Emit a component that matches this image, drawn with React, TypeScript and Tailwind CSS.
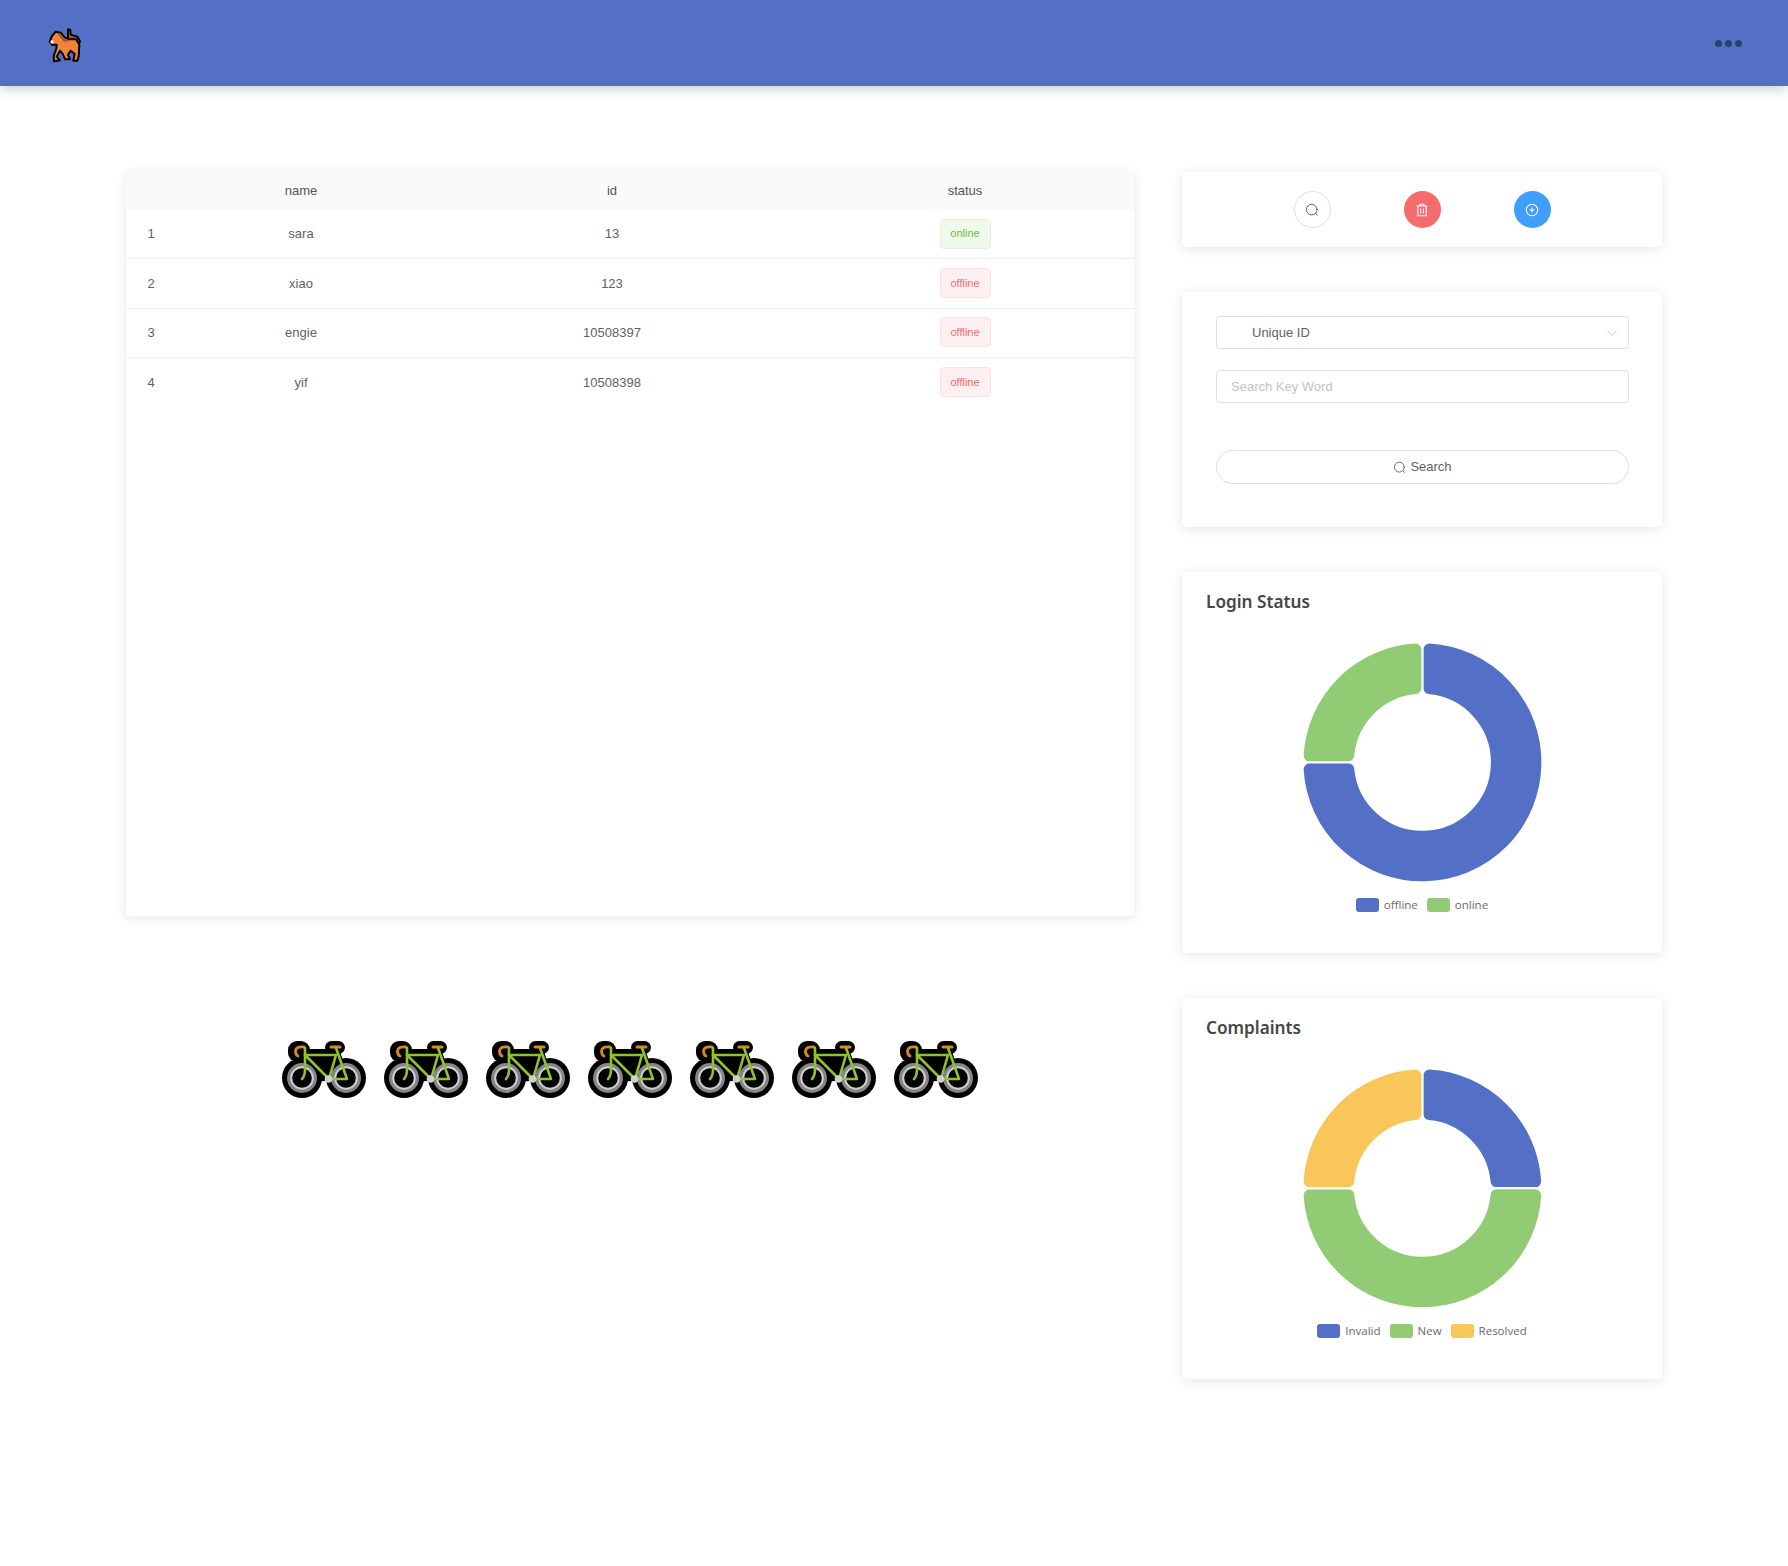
import React from "react";

const rows = [
  { n: 1, name: "sara", id: "13", status: "online" },
  { n: 2, name: "xiao", id: "123", status: "offline" },
  { n: 3, name: "engie", id: "10508397", status: "offline" },
  { n: 4, name: "yif", id: "10508398", status: "offline" },
];

function sector(cx: number, cy: number, R: number, r: number, c: number, a0: number, a1: number) {
  const P = (d: number, deg: number) => {
    const t = (deg * Math.PI) / 180;
    return `${(cx + d * Math.sin(t)).toFixed(2)} ${(cy - d * Math.cos(t)).toFixed(2)}`;
  };
  const ao = (Math.asin(c / (R - c)) * 180) / Math.PI;
  const ai = (Math.asin(c / (r + c)) * 180) / Math.PI;
  const dO = Math.sqrt((R - c) ** 2 - c ** 2);
  const dI = Math.sqrt((r + c) ** 2 - c ** 2);
  const large = a1 - a0 > 180 ? 1 : 0;
  return [
    `M ${P(R, a0 + ao)}`,
    `A ${R} ${R} 0 ${large} 1 ${P(R, a1 - ao)}`,
    `A ${c} ${c} 0 0 1 ${P(dO, a1)}`,
    `L ${P(dI, a1)}`,
    `A ${c} ${c} 0 0 1 ${P(r, a1 - ai)}`,
    `A ${r} ${r} 0 ${large} 0 ${P(r, a0 + ai)}`,
    `A ${c} ${c} 0 0 1 ${P(dI, a0)}`,
    `L ${P(dO, a0)}`,
    `A ${c} ${c} 0 0 1 ${P(R, a0 + ao)}`,
    "Z",
  ].join(" ");
}

function Donut({ parts }: { parts: { from: number; to: number; color: string }[] }) {
  return (
    <svg width="244" height="244" viewBox="0 0 244 244" className="block">
      {parts.map((p, i) => (
        <path key={i} d={sector(122.4, 122.3, 120, 67.5, 7, p.from, p.to)} fill={p.color} stroke="#ffffff" strokeWidth="2" />
      ))}
    </svg>
  );
}

function Legend({ items }: { items: { label: string; color: string }[] }) {
  return (
    <div className="flex justify-center items-center gap-[9px] h-[14px] text-[11.5px] text-[#6a6a6a] font-['Open_Sans','Noto_Sans',sans-serif]">
      {items.map((it) => (
        <div key={it.label} className="flex items-center gap-[5px]">
          <span className="block w-[23px] h-[14px] rounded-[3px]" style={{ backgroundColor: it.color }} />
          <span className="leading-none">{it.label}</span>
        </div>
      ))}
    </div>
  );
}

function Bike() {
  const green = "#8fc22e";
  return (
    <svg width="84" height="58" viewBox="0 0 84 58" className="block shrink-0">
      <g fill="#000000">
        <circle cx="20" cy="38" r="20" />
        <circle cx="64" cy="38" r="20" />
        <rect x="6" y="1" width="22" height="21" rx="9" />
        <rect x="43" y="1" width="20" height="13" rx="6.5" />
        <path d="M 22 9 L 57 9 L 68 40 L 20 42 Z" />
      </g>
      <circle cx="20" cy="38" r="13" fill="none" stroke="#858585" strokeWidth="4" />
      <circle cx="20" cy="38" r="10.8" fill="none" stroke="#cfcfcf" strokeWidth="2" />
      <circle cx="64" cy="38" r="13" fill="none" stroke="#858585" strokeWidth="4" />
      <circle cx="64" cy="38" r="10.8" fill="none" stroke="#cfcfcf" strokeWidth="2" />
      <path d="M 22 7 Q 14 6 13.5 11 Q 13.5 15 16 16" fill="none" stroke="#d68a1c" strokeWidth="2.8" strokeLinecap="round" />
      <path d="M 49 7 L 58 7" fill="none" stroke="#d68a1c" strokeWidth="3" strokeLinecap="round" />
      <g fill="none" stroke={green} strokeWidth="2.6" strokeLinecap="round" strokeLinejoin="round">
        <path d="M 23 8 L 23 29 Q 23 36 20 39" />
        <path d="M 23 15 L 47 39 L 65 39 L 54 8" />
        <path d="M 23 15 L 54 15 L 47 39" />
      </g>
      <circle cx="46.5" cy="39" r="3.8" fill="#d0cfce" />
    </svg>
  );
}

function Horse() {
  return (
    <svg width="50" height="50" viewBox="0 0 150 150" className="block">
      <path
        d="M 84 28 L 91 30 L 92 44 L 112 50 L 120 64 L 112 76 L 84 64 Z"
        fill="#a5591f"
        stroke="#000000"
        strokeWidth="6"
        strokeLinejoin="round"
      />
      <path
        d="M 29 65 L 36 48 L 47 35 L 62 38 L 74 52 L 88 58 L 108 58 L 118 74 L 116 110 L 112 122 L 100 122 L 104 102 L 92 92 L 84 104 L 90 118 L 76 118 L 67 100 L 60 92 L 50 110 L 60 121 L 42 124 L 41 108 L 49 86 L 50 74 L 36 74 Z"
        fill="#f1843a"
        stroke="#000000"
        strokeWidth="6"
        strokeLinejoin="round"
      />
      <path d="M 50 38 L 62 41 L 74 56 L 90 62 L 72 66 L 60 52 Z" fill="#a5591f" />
      <circle cx="36" cy="66" r="5" fill="#ffffff" />
    </svg>
  );
}

function SearchIcon({ size, color }: { size: number; color: string }) {
  return (
    <svg width={size} height={size} viewBox="0 0 14 14" fill="none" stroke={color} strokeWidth="1" strokeLinecap="round">
      <circle cx="6.8" cy="6.6" r="5.3" />
      <path d="M 10.6 10.5 L 12.3 12.3" />
    </svg>
  );
}

const tagBase = "flex items-center justify-center w-[51px] h-[30px] -mt-[1px] rounded-[4px] border text-[11px]";

export default function App() {
  return (
    <div className="w-[1788px] h-[1566px] bg-white font-['Liberation_Sans',Arial,sans-serif] overflow-hidden">
      <header className="h-[86px] bg-[#5470c6] flex items-center justify-between pl-[40px] pr-[46px] shadow-[0_3px_12px_rgba(0,0,0,0.2)]">
        <div className="mt-[4px]">
          <Horse />
        </div>
        <div className="flex items-center gap-[3px]">
          <span className="block w-[7px] h-[7px] rounded-full bg-[#26456c]" />
          <span className="block w-[7px] h-[7px] rounded-full bg-[#26456c]" />
          <span className="block w-[7px] h-[7px] rounded-full bg-[#26456c]" />
        </div>
      </header>

      <main className="flex gap-[48px] pl-[126px] pt-[86px]">
        <div className="w-[1008px]">
          <section className="h-[744px] bg-white rounded-[4px] shadow-[0_2px_12px_rgba(0,0,0,0.1)] overflow-hidden">
            <div className="grid grid-cols-[48px_254px_368px_338px] h-[38px] pb-[1px] items-center bg-[#fafafa] text-[13px] text-[#555555] text-center">
              <span />
              <span>name</span>
              <span>id</span>
              <span>status</span>
            </div>
            {rows.map((r, i) => (
              <div
                key={r.n}
                className={
                  i < 3
                    ? "grid grid-cols-[48px_254px_368px_338px] h-[49.4px] items-center border-b border-[#ebeef5] text-[13px] text-[#606266] text-center"
                    : "grid grid-cols-[48px_254px_368px_338px] h-[49.4px] items-center text-[13px] text-[#606266] text-center"
                }
              >
                <span className="pl-[2px]">{r.n}</span>
                <span>{r.name}</span>
                <span>{r.id}</span>
                <span className="flex justify-center">
                  <span
                    className={
                      r.status === "online"
                        ? `${tagBase} border-[#e1f3d8] bg-[#f0f9eb] text-[#67c23a]`
                        : `${tagBase} border-[#fde2e2] bg-[#fef0f0] text-[#f56c6c]`
                    }
                  >
                    {r.status}
                  </span>
                </span>
              </div>
            ))}
          </section>

          <div className="mt-[124px] flex justify-center gap-[18px]">
            {[0, 1, 2, 3, 4, 5, 6].map((i) => (
              <Bike key={i} />
            ))}
          </div>
        </div>

        <aside className="w-[480px] flex flex-col gap-[45px]">
          <section className="h-[75px] bg-white rounded-[4px] shadow-[0_2px_12px_rgba(0,0,0,0.1)] flex items-center justify-center gap-[73px]">
            <button className="w-[37px] h-[37px] rounded-full border border-[#dcdfe6] bg-white flex items-center justify-center">
              <SearchIcon size={14} color="#606266" />
            </button>
            <button className="w-[37px] h-[37px] rounded-full bg-[#f56c6c] flex items-center justify-center">
              <svg width="14" height="14" viewBox="0 0 14 14" fill="none" stroke="#ffffff" strokeWidth="1.1">
                <path d="M 1.5 3 L 12.5 3 M 5 3 L 5 1.3 L 9 1.3 L 9 3 M 2.8 3 L 2.8 12.7 L 11.2 12.7 L 11.2 3 M 5.6 5.5 L 5.6 10.5 M 8.4 5.5 L 8.4 10.5" />
              </svg>
            </button>
            <button className="w-[37px] h-[37px] rounded-full bg-[#409eff] flex items-center justify-center">
              <svg width="14" height="14" viewBox="0 0 14 14" fill="none" stroke="#ffffff" strokeWidth="1.1">
                <circle cx="7" cy="7" r="5.7" />
                <path d="M 7 4.4 L 7 9.6 M 4.4 7 L 9.6 7" />
              </svg>
            </button>
          </section>

          <section className="h-[235px] bg-white rounded-[4px] shadow-[0_2px_12px_rgba(0,0,0,0.1)] pl-[34px] pr-[33px] pt-[24px] text-[13px]">
            <div className="h-[33px] border border-[#dcdfe6] rounded-[4px] flex items-center justify-between pl-[35px] pr-[10px] text-[#606266]">
              <span>Unique ID</span>
              <svg width="12" height="12" viewBox="0 0 12 12" fill="none" stroke="#c0c4cc" strokeWidth="1">
                <path d="M 1.5 4 L 6 8.5 L 10.5 4" />
              </svg>
            </div>
            <div className="mt-[21px] h-[33px] border border-[#dcdfe6] rounded-[4px] flex items-center pl-[14px] text-[#c0c4cc]">
              Search Key Word
            </div>
            <button className="mt-[47px] w-full h-[34px] border border-[#dcdfe6] rounded-full flex items-center justify-center gap-[4px] text-[#606266] text-[13px]">
              <SearchIcon size={13} color="#606266" />
              <span>Search</span>
            </button>
          </section>

          <section className="h-[381px] bg-white rounded-[4px] shadow-[0_2px_12px_rgba(0,0,0,0.1)] pt-[18px]">
            <h2 className="pl-[24px] h-[24px] leading-[24px] text-[17.2px] font-semibold text-[#464646] font-['Noto_Sans','Open_Sans',sans-serif]">
              Login Status
            </h2>
            <div className="mt-[26px] flex justify-center">
              <Donut
                parts={[
                  { from: 0, to: 270, color: "#5470c6" },
                  { from: 270, to: 360, color: "#91cc75" },
                ]}
              />
            </div>
            <div className="mt-[14px]">
              <Legend
                items={[
                  { label: "offline", color: "#5470c6" },
                  { label: "online", color: "#91cc75" },
                ]}
              />
            </div>
          </section>

          <section className="h-[381px] bg-white rounded-[4px] shadow-[0_2px_12px_rgba(0,0,0,0.1)] pt-[18px]">
            <h2 className="pl-[24px] h-[24px] leading-[24px] text-[17.2px] font-semibold text-[#464646] font-['Noto_Sans','Open_Sans',sans-serif]">
              Complaints
            </h2>
            <div className="mt-[26px] flex justify-center">
              <Donut
                parts={[
                  { from: 0, to: 90, color: "#5470c6" },
                  { from: 90, to: 270, color: "#91cc75" },
                  { from: 270, to: 360, color: "#f9c65a" },
                ]}
              />
            </div>
            <div className="mt-[14px]">
              <Legend
                items={[
                  { label: "Invalid", color: "#5470c6" },
                  { label: "New", color: "#91cc75" },
                  { label: "Resolved", color: "#f9c65a" },
                ]}
              />
            </div>
          </section>
        </aside>
      </main>
    </div>
  );
}
